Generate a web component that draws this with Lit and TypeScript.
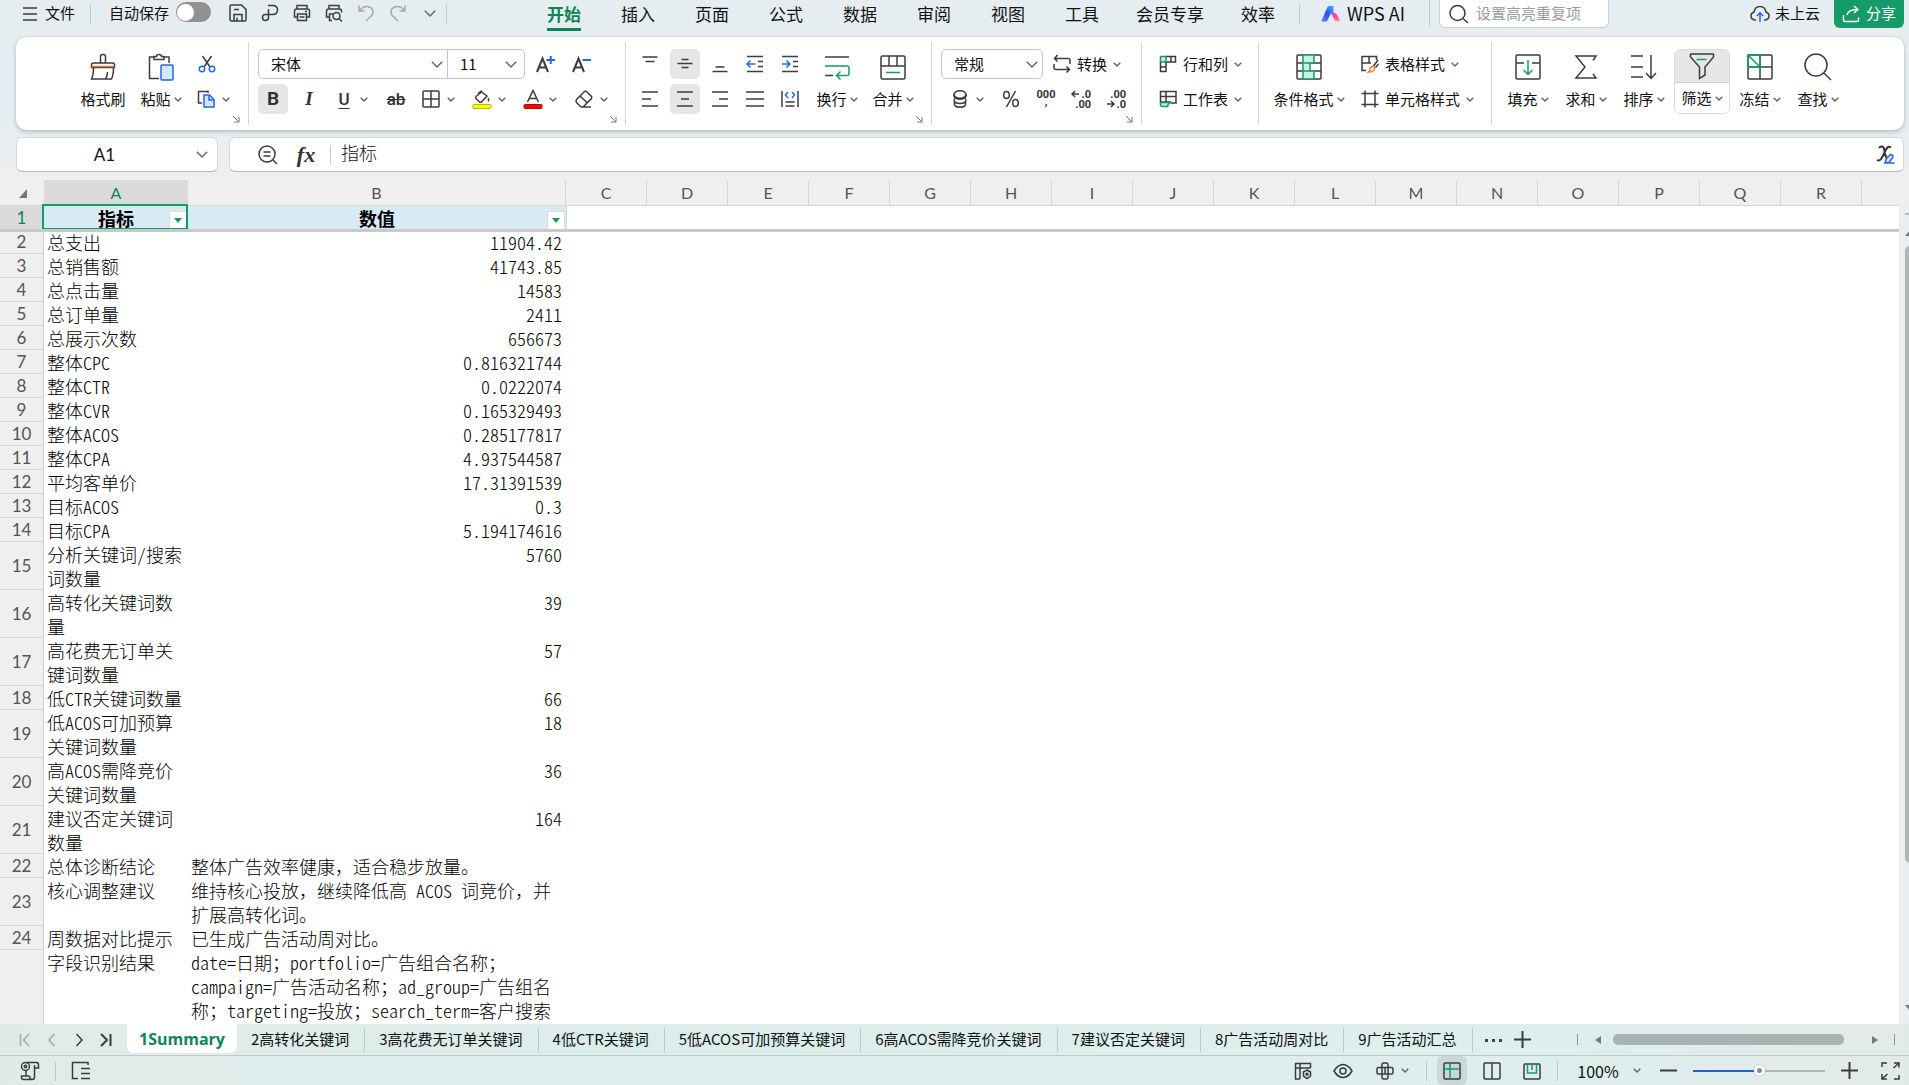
import { LitElement, html, svg, css, nothing, TemplateResult, SVGTemplateResult } from "lit";
import { customElement } from "lit/decorators.js";
import { classMap } from "lit/directives/class-map.js";

const icon = (w: number, h: number, body: SVGTemplateResult) =>
  html`<svg class="ic" width=${w} height=${h} viewBox="0 0 ${w} ${h}" aria-hidden="true">${body}</svg>`;

const chev = html`<svg class="ic chev" width="8" height="5" viewBox="0 0 8 5" aria-hidden="true"><path d="M.7.7 4 4 7.3.7" /></svg>`;
const chevBig = html`<svg class="ic chev" width="12" height="7" viewBox="0 0 12 7" aria-hidden="true"><path d="M.8.8 6 6 11.2.8" /></svg>`;

const I = {
  menu: icon(14, 16, svg`<path d="M0 2h14M0 8h14M0 14h14"/>`),
  save: icon(18, 18, svg`<path d="M1 2.5Q1 1 2.5 1H12.500L17 5.500V15.500Q17 17 15.500 17H2.500Q1 17 1 15.500ZM5 17V10.500H13V17M5 5.500h5M8 13.500v3.500"/>`),
  pdf: icon(18, 18, svg`<path d="M7 1.500H11.500Q16.500 1.500 16.500 6T11.500 10.500H4.500Q1.500 10.500 1.500 13.500T4.500 16.500T7.500 13.500V5"/>`),
  print: icon(18, 18, svg`<path d="M4 5V1.500H14V5M4 13H1.500V7Q1.500 5 3.500 5H14.500Q16.500 5 16.500 7V13H14M4.500 10H13.500V16.500H4.500ZM12 7.500h2M6.500 13h5"/>`),
  preview: icon(18, 18, svg`<path d="M4 5V1.500H14V5M4 13H1.500V7Q1.500 5 3.500 5H14.500Q16.500 5 16.500 7V8.500M7 16.500H4.500V10H8"/><circle cx="11.500" cy="12" r="3.500"/><path d="M14 14.500l3 3"/>`),
  undo: icon(18, 18, svg`<path class="faint" d="M2 1.500V7H7.500M2 7Q6 2 10.500 2.500Q16 3.500 16 8Q16 11 12.500 13.500L9 17"/>`),
  redo: icon(18, 18, svg`<path class="faint" d="M16 1.500V7H10.500M16 7Q12 2 7.500 2.500Q2 3.500 2 8Q2 11 5.500 13.500L9 17"/>`),
  wps: html`<svg class="ic" width="20" height="16" viewBox="0 0 20 16" aria-hidden="true">
    <defs>
      <linearGradient id="wa" x1="0" y1="1" x2="1" y2="0"><stop offset="0" stop-color="#7a7cff" /><stop offset=".5" stop-color="#2f4bff" /><stop offset="1" stop-color="#38b6ff" /></linearGradient>
      <linearGradient id="wb" x1="0" y1="0" x2="0" y2="1"><stop offset="0" stop-color="#f02ad8" /><stop offset=".6" stop-color="#ff4fa0" /><stop offset="1" stop-color="#ffb35c" /></linearGradient>
    </defs>
    <path style="stroke:none" fill="url(#wa)" d="M6.500 1Q7 0 8 0H12.500V7H10L6 15Q5.500 15.500 4.500 15.500H1Q0 15.500 .5 14.500Z" />
    <path style="stroke:none" fill="url(#wb)" d="M10 7H13.500Q15 7 15.700 8.500L19.500 15.500H15.500Q14 15.500 13.400 14Z" />
  </svg>`,
  search: icon(20, 20, svg`<circle cx="8.500" cy="9" r="7.500"/><path d="M14 14.500l5 4.500"/>`),
  cloud: icon(20, 18, svg`<path d="M6 15H5Q1 14.500 1 10.800Q1 8 4 7Q5 1.500 10 1.500T16 7Q19 8 19 10.800Q19 14.500 15 15H14"/><path class="blue" d="M10 17V8M6.800 11L10 7.800 13.200 11"/>`),
  share: icon(18, 18, svg`<path class="white" d="M1.500 10V15Q1.500 16.500 3 16.500H15Q16.500 16.500 16.500 15V12.500M5 10Q6 4.500 15.500 4.500M12 1L15.800 4.500 12 8"/>`),
  brush: icon(26, 28, svg`<path d="M10.500 10V3.500Q10.500 1.500 13 1.500T15.500 3.500V10M3.500 10H22.500Q24.500 10 24.500 12V14.500H1.500V12Q1.500 10 3.500 10ZM3.500 15Q3.500 22 1.500 26H21.500Q23.500 22 23.500 15M15.500 26Q17.500 23 17.500 19"/><path class="orange" d="M1.500 13.500H24.500"/>`),
  paste: icon(26, 28, svg`<path d="M6 4H1.500V25.500H11M16 4H21V10"/><path d="M6 6.500V3.500H8.500Q8.500 1.500 11 1.500T13.500 3.500H16V6.500Z"/><rect class="bluefill" x="13" y="12" width="12" height="15" rx="1"/>`),
  cut: icon(18, 18, svg`<path d="M4.500 1L12 12M13.500 1L6 12"/><circle class="blue" cx="4" cy="14" r="2.700"/><circle class="blue" cx="14" cy="14" r="2.700"/>`),
  copy: icon(18, 18, svg`<path d="M5 13H1.500V1.500H11V3"/><path class="bluefill" d="M7 5H12.500L17 9.500V17H7Z"/><path class="blue" d="M12 5V10H17"/>`),
  aPlus: icon(20, 20, svg`<path class="bold" d="M2 18L7.500 4.500L13 18M4 13.500H11"/><path class="blue bold" d="M11.500 6h8.500M15.700 2v8"/>`),
  aMinus: icon(20, 20, svg`<path class="bold" d="M2 18L7.500 4.500L13 18M4 13.500H11"/><path class="blue bold" d="M11.500 6h8.500"/>`),
  border: icon(18, 18, svg`<rect x="1" y="1" width="16" height="16" rx="1"/><path d="M9 1v16M1 9h16"/>`),
  fill: icon(20, 20, svg`<path d="M6 4.500L10 1.500M4 7.500L9.500 3L15 7L9.500 13Q8.500 13.500 7.500 13L4 9.500Q3.500 8.500 4 7.500ZM16.500 9v3.500"/><rect x="1" y="15.500" width="18" height="4" rx="1" style="fill:#ff0;stroke:#b9b900;stroke-width:1"/>`),
  fontColor: icon(20, 20, svg`<path d="M4.500 13L10 1.500L15.500 13M6.500 9.500H13.500"/><rect x="1" y="15.500" width="18" height="4" rx="1" style="fill:#f00;stroke:#c00000;stroke-width:1"/>`),
  eraser: icon(20, 18, svg`<path d="M2.500 9.500L10.500 1.500Q11.500 1 12.500 1.500L17.500 6.500Q18 7.500 17.500 8.500L9 17H7L2.500 12.500Q1.500 11 2.500 9.500ZM6 6L13.500 13M9 17h8"/>`),
  vTop: icon(18, 18, svg`<path d="M1.500 2h15M4.500 6.500h9"/>`),
  vMid: icon(18, 18, svg`<path d="M5.500 4.500h7M1.500 8.500h15M5.500 12.500h7"/>`),
  vBot: icon(18, 18, svg`<path d="M4.500 12h9M1.500 16.500h15"/>`),
  outdent: icon(18, 18, svg`<path d="M1 1.500h16M12 6.500h5M12 11.500h5M1 16.500h16"/><path class="blue" d="M9.500 9H1M4.500 5.500L1 9l3.500 3.500"/>`),
  indent: icon(18, 18, svg`<path d="M1 1.500h16M12 6.500h5M12 11.500h5M1 16.500h16"/><path class="blue" d="M1 9H9M5.500 5.500L9 9l-3.500 3.500"/>`),
  hLeft: icon(18, 18, svg`<path d="M1 2h16M1 9h9M1 16h16"/>`),
  hMid: icon(18, 18, svg`<path d="M1 2h16M5 9h8M1 16h16"/>`),
  hRight: icon(18, 18, svg`<path d="M1 2h16M8 9h9M1 16h16"/>`),
  hJust: icon(18, 18, svg`<path d="M0 2h18M0 9h18M0 16h18"/>`),
  hDist: icon(18, 18, svg`<path d="M1 1v16M17 1v16M4.500 12h9M4.500 16h9"/><path class="blue" d="M7 2L4.500 5 7 8M11 2L13.500 5 11 8"/>`),
  wrap: icon(26, 26, svg`<path d="M1 3h24M1 21.500h8"/><path class="green" d="M1 12H23Q25 12 25 14V19.500Q25 21.500 23 21.500H13M16.500 17.500L12.500 21.500l4 4"/>`),
  merge: icon(26, 26, svg`<rect x="1" y="2" width="24" height="23" rx="1.500"/><path d="M1 12h24M9 2v10M17 2v10"/><path class="green" d="M6 18.500h14"/>`),
  convert: icon(18, 18, svg`<path d="M4.500 0L1.500 3.500l3 3M1.500 3.500H15Q17 3.500 17 5.500V9M1 9v3.500Q1 14.500 3 14.500H16.500M13.500 11.500l3 3-3 3"/>`),
  coins: icon(18, 18, svg`<ellipse cx="9" cy="4.500" rx="6" ry="3.800"/><path d="M3 4.500Q2.500 7 4.500 8Q3 9 3 10.500Q4 13.500 9 13.500T15 10.500Q15 9 13.500 8Q15.500 7 15 4.500M3.500 12Q2 17.200 9 17.200T14.500 12M4.500 8Q9 10.500 13.500 8"/>`),
  percent: icon(18, 18, svg`<ellipse cx="4.500" cy="5" rx="2.800" ry="3.500"/><ellipse cx="13.500" cy="13" rx="2.800" ry="3.500"/><path d="M13.500 1L4.500 17"/>`),
  thousands: icon(20, 20, svg`<text x="10" y="9" text-anchor="middle">000</text><text x="10" y="16" text-anchor="middle">,</text>`),
  decMore: icon(20, 20, svg`<path d="M8 5H1M4 2L1 5l3 3"/><text x="20" y="9" text-anchor="end">.0</text><text x="20" y="19" text-anchor="end">.00</text>`),
  decLess: icon(20, 20, svg`<path d="M1 15H8M5 12l3 3-3 3"/><text x="20" y="9" text-anchor="end">.00</text><text x="20" y="19" text-anchor="end">.0</text>`),
  rowsCols: icon(18, 18, svg`<path d="M1.500 7V16.500H7V7M1.500 12H7M7 1.500H16.500V7H7M12 1.500V7"/><path class="greenfill" d="M1.500 1.500H7V7H1.500Z"/>`),
  sheet: icon(18, 18, svg`<path d="M12 13H17V1.500H1.500V12M1.500 6.500H17M7 1.500V12M1.500 12H12"/><path class="greenfill" d="M1.500 12.500H12Q9 13 8.500 16.500H3.500Q1.500 16.500 1.500 14.500Z"/>`),
  cond: icon(26, 26, svg`<rect x="1" y="1" width="24" height="24" rx="1"/><path d="M1 9h24M1 17h24"/><path class="greenfill" d="M7 1H18V9H7ZM7 9H14V17H7ZM7 17H18V25H7Z"/>`),
  tableStyle: icon(18, 18, svg`<path d="M5 15.500H1V1.500H15.500V5M1 8H10M8 1.500V8M17 5L12.500 11M17.500 9L14.500 12.500"/><path class="orange" d="M7.500 17Q9 16 9 14T11.500 11.500T13.500 14Q13 17 7.500 17Z"/>`),
  cellStyle: icon(18, 18, svg`<path d="M4 .5v17M14 .5v17M.5 3.500h17M.5 14.500h17"/>`),
  fillDown: icon(26, 26, svg`<path d="M9 9H1V2Q1 1 2 1H24Q25 1 25 2V9H17M1 9V24Q1 25 2 25H24Q25 25 25 24V9"/><path class="green" d="M13 6V20M8.500 16L13 20.500 17.500 16"/>`),
  sum: icon(26, 26, svg`<path d="M20 6.500L23 2H3L12 13L3 24H23L20 20"/>`),
  sort: icon(28, 26, svg`<path d="M1 2h12M1 13h12M1 23h12M21 1V24M16 19l5 5.500 5-5.500"/>`),
  filter: icon(26, 26, svg`<path d="M1.500 2Q1 1 2 1H24Q25 1 24.500 2V4L16 14V22L10.500 25.500V14L1.500 4Z"/><path class="green" d="M7.500 6.500h10"/>`),
  freeze: icon(26, 26, svg`<rect x="1" y="1" width="24" height="24" rx="1"/><path d="M13 13V25M13 13H25M1 13H13M13 1V13"/><path class="green" d="M1 1H13V13H1ZM1 1L13 13"/>`),
  find: icon(28, 28, svg`<circle cx="12" cy="12" r="11"/><path d="M20 20l7 7"/>`),
  launch: icon(8, 8, svg`<path class="thin" d="M1 1L7 7M7 2V7H2"/>`),
  zoomOut: icon(20, 20, svg`<circle cx="9" cy="9" r="8"/><path d="M15 15l4 4M5.500 7h7M5.500 11h7"/>`),
  fx: html`<span class="fx">fx</span>`,
  varEdit: icon(20, 20, svg`<path style="stroke:#333;stroke-width:2" d="M3 3Q4 1.500 5.500 1.500Q8 1.500 8.500 6T11 14M15 2.500Q12 0 9.500 5.500T5 14Q3 16.500 1 15"/><path class="bluefill" d="M9 18L10.500 13.500L14.500 9.500Q17 9.500 17 12L13 17.500ZM9 18h9.500"/>`),
  first: icon(12, 14, svg`<path class="faint" d="M1.500 1v12M10 1L4.500 7l5.500 6"/>`),
  prev: icon(12, 14, svg`<path class="faint" d="M8.500 1L3 7l5.500 6"/>`),
  next: icon(12, 14, svg`<path d="M3.500 1L9 7l-5.500 6"/>`),
  last: icon(12, 14, svg`<path style="stroke-width:2" d="M1 1L7 7l-6 6M10.500 1v12"/>`),
  plus: icon(17, 17, svg`<path style="stroke-width:2" d="M8.500 0v17M0 8.500h17"/>`),
  minus: icon(17, 17, svg`<path style="stroke-width:2" d="M0 8.500h17"/>`),
  dots: icon(17, 4, svg`<path style="stroke:none;fill:#444" d="M0 1h3v3H0ZM7 1h3v3H7ZM14 1h3v3H14Z"/>`),
  macro: icon(20, 20, svg`<circle cx="5.500" cy="5.500" r="4"/><circle cx="5.500" cy="5.500" r="1.200"/><path d="M7 1.500H16.500Q18.500 1.500 18.500 4V7H14.500V16Q14.500 18.500 12 18.500H3.500Q1.500 18.500 1.500 16.500V15H9.500M14.500 7V4M6 10v5M9.500 15Q9.500 18.500 12 18.500"/>`),
  outline: icon(20, 19, svg`<path d="M17 4V1.500H1.500V17.500H7M10 7.500h9M10 12.500h9M10 17.500h9"/>`),
  view: icon(18, 18, svg`<path d="M6 17H1.500V1.500H16.500V6M1.500 6H16.500M6 1.500V17"/><path d="M13 8L16.500 10V14L13 16.500L9.500 14V10Z"/><circle cx="13" cy="12.200" r="1"/>`),
  eye: icon(20, 16, svg`<path d="M1 8Q5 1.500 10 1.500T19 8Q15 14.500 10 14.500T1 8Z"/><circle cx="10" cy="8" r="3"/>`),
  cross: icon(18, 18, svg`<path d="M6 2.500Q6 1 7.500 1H10.500Q12 1 12 2.500V15.500Q12 17 10.500 17H7.500Q6 17 6 15.500ZM2.500 5.500H15.500Q17 5.500 17 7V10.500Q17 12 15.500 12H2.500Q1 12 1 10.500V7Q1 5.500 2.500 5.500ZM9 5.500V12"/>`),
  normal: icon(18, 18, svg`<rect x="1" y="1" width="16" height="16" rx="1"/><path class="green" d="M7 1v16M1 7h16"/>`),
  page: icon(18, 18, svg`<rect x="1" y="1" width="16" height="16" rx="1"/><path d="M9 1v16"/>`),
  breaks: icon(18, 18, svg`<rect x="1" y="2" width="16" height="15" rx="1"/><path class="green" d="M4.500 2V11H13.500V2M9 2v6"/>`),
  full: icon(19, 18, svg`<path d="M1 5V1H6M13 1H18V5.500M17.500 1.500L12.500 6M18 13v4H13M1 12v5H6M1.500 16.500L6.500 12"/>`),
};

const rows: { n: string; a: string; b: string; text?: boolean }[] = [
  { n: "2", a: "总支出", b: "11904.42" },
  { n: "3", a: "总销售额", b: "41743.85" },
  { n: "4", a: "总点击量", b: "14583" },
  { n: "5", a: "总订单量", b: "2411" },
  { n: "6", a: "总展示次数", b: "656673" },
  { n: "7", a: "整体CPC", b: "0.816321744" },
  { n: "8", a: "整体CTR", b: "0.0222074" },
  { n: "9", a: "整体CVR", b: "0.165329493" },
  { n: "10", a: "整体ACOS", b: "0.285177817" },
  { n: "11", a: "整体CPA", b: "4.937544587" },
  { n: "12", a: "平均客单价", b: "17.31391539" },
  { n: "13", a: "目标ACOS", b: "0.3" },
  { n: "14", a: "目标CPA", b: "5.194174616" },
  { n: "15", a: "分析关键词/搜索词数量", b: "5760" },
  { n: "16", a: "高转化关键词数量", b: "39" },
  { n: "17", a: "高花费无订单关键词数量", b: "57" },
  { n: "18", a: "低CTR关键词数量", b: "66" },
  { n: "19", a: "低ACOS可加预算关键词数量", b: "18" },
  { n: "20", a: "高ACOS需降竞价关键词数量", b: "36" },
  { n: "21", a: "建议否定关键词数量", b: "164" },
  { n: "22", a: "总体诊断结论", b: "整体广告效率健康，适合稳步放量。", text: true },
  { n: "23", a: "核心调整建议", b: "维持核心投放，继续降低高 ACOS 词竞价，并扩展高转化词。", text: true },
  { n: "24", a: "周数据对比提示", b: "已生成广告活动周对比。", text: true },
  { n: "", a: "字段识别结果", b: "date=日期；portfolio=广告组合名称；campaign=广告活动名称；ad_group=广告组名称；targeting=投放；search_term=客户搜索", text: true },
];

// Cells use half-width Latin figures; the full-width comma keeps its whole em.
const cellText = (s: string) =>
  s.split(/(，)/).map((part, i) => (i % 2 ? html`<span class="full">${part}</span>` : part));

const columns = "CDEFGHIJKLMNOPQR".split("");
const menus = ["开始", "插入", "页面", "公式", "数据", "审阅", "视图", "工具", "会员专享", "效率"];
const sheets = ["1Summary", "2高转化关键词", "3高花费无订单关键词", "4低CTR关键词", "5低ACOS可加预算关键词", "6高ACOS需降竞价关键词", "7建议否定关键词", "8广告活动周对比", "9广告活动汇总"];

const sq = (ic: TemplateResult, name: string, on = false) =>
  html`<button class=${classMap({ sq: true, on })} aria-label=${name}>${ic}</button>`;
const split = (ic: TemplateResult, name: string) =>
  html`<button class="split" aria-label=${name}><span class="slot">${ic}</span>${chev}</button>`;
const wide = (ic: TemplateResult, label: string) =>
  html`<button class="wide">${ic}<span>${label}</span>${chev}</button>`;
const big = (ic: TemplateResult, label: string, arrow = true, on = false) =>
  html`<button class=${classMap({ big: true, boxed: on })}><span class="top">${ic}</span><span class="lbl">${label}${arrow ? chev : nothing}</span></button>`;
const launcher = (name: string) => html`<button class="launcher" aria-label=${name}>${I.launch}</button>`;

@customElement("app-root")
export class AppRoot extends LitElement {
  static styles = css`
    :host {
      display: flex;
      flex-direction: column;
      height: 100vh;
      overflow: hidden;
      background: linear-gradient(180deg, #e5edf1 0, #e5edf1 120px, #efefef 172px);
      font: 15px/20px "Noto Sans CJK SC", "Liberation Sans", sans-serif;
      color: #111;
    }
    * { box-sizing: border-box; }
    button, input, select {
      font: inherit;
      color: inherit;
      background: none;
      border: 0;
      margin: 0;
      padding: 0;
      outline: 0;
    }
    button { display: flex; align-items: center; justify-content: center; white-space: nowrap; }
    .ic { display: block; flex: none; fill: none; stroke: #3c3c3c; stroke-width: 1.5; overflow: visible; }
    .ic text { fill: #333; stroke: none; font: bold 11px Roboto, sans-serif; }
    .chev { stroke: #666; }
    .bold { stroke-width: 2; }
    .blue { stroke: #2468e0; }
    .bluefill { stroke: #2468e0; fill: #d8e6ff; }
    .green { stroke: #149b68; }
    .greenfill { stroke: #149b68; fill: #cdeee0; }
    .orange { stroke: #e8792f; }
    .white { stroke: #fff; }
    .faint { stroke: #a3a8ab; }
    .thin { stroke: #777; stroke-width: 1; }

    .header { display: flex; align-items: flex-start; height: 37px; padding: 0 5px 0 23px; flex: none; }
    .header > * { height: 28px; flex: none; }
    .header > button > span, .auto > span { padding-bottom: 2px; }
    .file { gap: 8px; }
    .rule { width: 1px; height: 20px; background: #c5ccd0; }
    .header .rule { height: 20px; margin-top: 4px; }
    .auto { display: flex; align-items: center; gap: 7px; margin: 0 11px 0 18px; }
    .toggle { appearance: none; width: 35px; height: 20px; border-radius: 10px; background: #919191; display: flex; align-items: center; padding-left: 1px; margin-bottom: 4px; }
    .toggle::before { content: ""; width: 17px; height: 17px; border-radius: 50%; background: #fff; }
    .quick { display: flex; }
    .quick button { width: 32px; height: 26px; }
    .file + .rule { margin-left: 15px; }
    .menus { display: flex; margin: 0 4px 0 80px; }
    .header .menus { height: 31px; }
    .menus button { width: 74px; font-size: 17px; height: 28px; align-items: flex-start; }
    .menus button.long { width: 102px; }
    .menus button span { height: 31px; line-height: 27px; }
    .menus button.on span { color: #0e8457; font-weight: 700; border-bottom: 3px solid #0e8457; }
    .ai { font-size: 18px; gap: 6px; margin: 0 24px 0 21px; }
    .header .rule.tall { height: 26px; margin-top: 0; }
    .search { display: flex; align-items: center; gap: 7px; margin-left: 9px; width: 170px; padding: 0 9px; background: #fff; border: 1px solid #c9d0d3; border-top: 0; border-radius: 0 0 6px 6px; }
    .search input { width: 100%; min-width: 0; padding-bottom: 2px; }
    .search input::placeholder { color: #9a9a9a; opacity: 1; }
    .cloud { margin-left: auto; gap: 5px; }
    .share { margin-left: 14px; width: 70px; gap: 6px; background: #149b68; color: #fff; border-radius: 0 0 6px 6px; }

    .ribbon { display: flex; flex: none; height: 93px; margin: 0 5px 0 16px; padding: 5px 0; background: #fff; border-radius: 10px; box-shadow: 0 0 1px #9fa9ad, 0 2px 4px #b7c0c4; }
    .group { display: grid; flex: none; border-right: 1px solid #d7d7d7; height: 83px; }
    .group > * { grid-area: 1 / 1; }
    .group:last-child { border: 0; flex: 1; }
    .launcher { align-self: end; justify-self: end; width: 16px; height: 12px; margin-right: 4px; }
    .body { display: flex; padding: 7px 0 0 9px; height: 72px; }
    .g1 { width: 233px; } .g2 { width: 377px; } .g3 { width: 306px; } .g4 { width: 210px; }
    .g5 { width: 117px; } .g6 { width: 233px; }
    .g1 .body { padding-left: 58px; }
    .g5 .body { padding-left: 12px; }
    .g7 .body { padding-left: 7px; }
    .g6 .stack { margin-left: 6px; }
    .g1 .stack { margin-left: 2px; }
    .stack { display: flex; flex-direction: column; gap: 5px; }
    .line { display: flex; gap: 5px; height: 30px; }
    .line.loose { gap: 6px; }
    .line.inset { padding-left: 5px; }
    .sq { width: 30px; height: 30px; border-radius: 5px; }
    .sq.on { background: #e6e6e6; }
    .split { width: 45px; height: 30px; padding-left: 5px; gap: 7px; justify-content: flex-start; }
    .slot { width: 18px; display: flex; justify-content: center; }
    .wide { height: 30px; padding: 0 5px; gap: 6px; justify-content: flex-start; }
    .wide span { padding-bottom: 1px; }
    .big { flex-direction: column; width: 58px; height: 65px; border-radius: 6px; }
    .g3 .big { width: 56px; }
    .g3 .big:first-of-type { margin-left: 4px; }
    .g6 .big { width: 82px; }
    .big .top { flex: 1; display: flex; align-items: center; justify-content: center; width: 100%; }
    .big .lbl { height: 30px; display: flex; align-items: center; gap: 3px; }
    .big.boxed { border: 1px solid #dcdcdc; margin: 0 1px; width: 56px; }
    .boxed .top { background: #e6e6e6; border-bottom: 1px solid #cfcfcf; border-radius: 5px 5px 0 0; }
    .glyph { font: 19px/20px Roboto, sans-serif; color: #333; }
    .glyph.b { font-weight: 700; font-size: 19px; }
    .glyph.i { font: italic bold 19px/20px "Liberation Serif", serif; }
    .glyph.u { font-weight: 500; text-decoration: underline; text-underline-offset: 3px; font-size: 17px; }
    .glyph.s { font-weight: 500; text-decoration: line-through; font-size: 17px; }
    .pick { display: grid; align-items: center; border: 1px solid #c4c4c4; border-radius: 5px; height: 30px; background: #fff; }
    .pick > * { grid-area: 1 / 1; }
    .pick select { appearance: none; width: 100%; height: 28px; padding-left: 12px; }
    .pick .chev { justify-self: end; margin-right: 4px; pointer-events: none; }
    .family { width: 190px; border-radius: 5px 0 0 5px; }
    .size { width: 77px; border-radius: 0 5px 5px 0; border-left: 0; margin: 0 -1px 0 -6px; }
    .size .chev { margin-right: 7px; }
    .format { width: 102px; }

    .formula { display: flex; flex: none; gap: 11px; margin: 7px 5px 8px 16px; }
    .box { display: flex; align-items: center; height: 35px; background: #fff; border: 1px solid #d3d8da; border-bottom-color: #b8b8b8; border-radius: 6px; }
    .name { width: 202px; padding-right: 9px; }
    .name input { flex: 1; min-width: 0; text-align: center; font: 17px Lato, sans-serif; padding-right: 4px; }
    .fbar { flex: 1; padding: 0 7px 0 28px; }
    .fbar button { width: 20px; }
    .fx { font: italic bold 22px/20px "Liberation Serif", serif; color: #333; }
    .fbar .fxb { margin: 0 14px 0 18px; }
    .fbar input { flex: 1; margin-left: 10px; font-size: 18px; font-weight: 300; line-height: 24px; padding-bottom: 5px; }

    .sheet { display: flex; flex: 1; min-height: 0; overflow: hidden; background: #e6ecee; }
    .canvas { flex: 1; min-width: 0; overflow: hidden; background: #fff; position: relative; }
    table { width: 100%; table-layout: fixed; border-collapse: separate; border-spacing: 0; font-size: 18px; line-height: 24px; }
    .c0 { width: 44px; } .ca { width: 144px; } .cb { width: 378px; } .cx { width: 81px; }
    thead th { height: 26px; padding: 0; background: #efefef; color: #555; font: 16px/20px Lato, sans-serif; border-right: 1px solid #d6d6d6; border-bottom: 1px solid #d6d6d6; }
    thead th.sel { background: #dadada; color: #0e8457; border-right: 0; }
    thead th.corner, thead th.end { border-right: 0; }
    .corner div { display: flex; justify-content: flex-end; padding: 2px 17px 0 0; }
    tbody th { background: #efefef; color: #555; font: 17px/20px Lato, sans-serif; border-right: 1px solid #cfcfcf; border-bottom: 1px solid #d6d6d6; padding: 0; }
    tbody th.sel { background: #dadada; color: #0e8457; }
    tbody td { padding: 0 4px 0 3px; vertical-align: top; font-weight: 300; font-feature-settings: "hwid"; color: #000; }
    .full { font-feature-settings: normal; }
    td.num { text-align: right; }
    tr.last th { height: 120px; }
    tr.head td { height: 24px; background: #d8eaf5; font-weight: 700; }
    tr.head td.blank { background: #fff; border-left: 1px solid #d6d6d6; }
    .cell { display: grid; grid-template-columns: 16px 1fr 18px; align-items: end; text-align: center; height: 24px; margin-right: -3px; }
    .cell span { grid-column: 2; }
    .drop { width: 18px; height: 19px; background: #fff; border: 1px solid #ddd; }
    .a1 { position: relative; }
    .a1::after { content: ""; position: absolute; inset: -2px 0 0 -2px; border: 2px solid #149b68; pointer-events: none; }
    .freeze { position: absolute; left: 0; right: 0; top: 49px; height: 3px; background: #c9c9c9; }
    .vbar { display: flex; flex-direction: column; flex: none; width: 10px; padding: 0 0 12px 6px; overflow: hidden; background: #e9eef0; border-top: 26px solid #efefef; }
    .vbar .dash { width: 12px; height: 2px; margin: 7px 0 14px; background: #b9bcbd; flex: none; }
    .vbar .thumb { flex: 0 1 617px; width: 14px; margin-top: 10px; background: #b3b6b6; border-radius: 5px; }
    .vbar .down { margin-top: auto; }
    .vbar svg { flex: none; }

    .tabs { display: flex; align-items: center; flex: none; height: 32px; padding: 0 14px 0 11px; background: linear-gradient(90deg, #e0ebe8, #dcedec 40%, #ddeeec 80%, #e2eae9); border-bottom: 1px solid #bccaca; }
    .nav { display: flex; margin-right: 8px; }
    .nav button { width: 27px; height: 28px; }
    .tab { height: 24px; padding: 0 15px 1px 14px; border-right: 1px solid #bccaca; }
    .tab.on { height: 29px; align-self: flex-start; padding: 0 12px; background: #fff; border: 0; border-radius: 0 0 7px 7px; color: #0e8457; font: bold 16px/20px "Open Sans", sans-serif; }
    .tabs .more { width: 17px; height: 24px; margin-left: 12px; }
    .hbar { display: flex; align-items: center; flex: 0 0 318px; margin-left: auto; }
    .hbar .tick { width: 1px; height: 11px; background: #8c9898; }
    .hbar .thumb { flex: 1; height: 11px; border-radius: 5px; background: #a9b3b2; margin: 0 28px 0 12px; }
    .hbar .l { margin-left: 17px; }
    .hbar .r { margin-right: 16px; }

    .status { display: flex; align-items: center; flex: none; height: 29px; padding: 0 9px 0 20px; background: linear-gradient(90deg, #dfebe9, #dcedec 40%, #ddeeec 80%, #e2eae9); }
    .status .rule { background: #bccaca; }
    .lefts { display: flex; align-items: center; gap: 15px; }
    .rights { display: flex; align-items: center; margin-left: auto; gap: 10px; }
    .rights button { width: 30px; height: 29px; }
    .rights .on { background: #c9d7d6; border-radius: 6px; }
    .rights .mv { width: 40px; gap: 7px; margin-left: 8px; justify-content: flex-start; }
    .rights button.zoom { width: 62px; margin: 0 4px 0 10px; font-size: 16px; gap: 14px; }
    .rights button.z { width: 17px; margin: 0 6px; }
    .rights button.end { width: 19px; margin-left: 7px; }
    input[type="range"] { appearance: none; width: 132px; height: 14px; background: linear-gradient(90deg, #1f60c9 50%, #adb9b9 50%) center / 100% 2px no-repeat; }
    input[type="range"]::-webkit-slider-thumb { appearance: none; width: 11px; height: 11px; border-radius: 50%; border: 3px solid #fff; background: #8a8a8a; box-shadow: 0 0 1px #667; }
  `;

  private tri(points: string, w: number, h: number, cls = "") {
    return html`<svg class=${cls} width=${w} height=${h} viewBox="0 0 ${w} ${h}" aria-hidden="true"><polygon points=${points} fill="#777" /></svg>`;
  }

  private header() {
    return html`<header class="header">
      <button class="file">${I.menu}<span>文件</span></button>
      <span class="rule"></span>
      <label class="auto"><span>自动保存</span><input type="checkbox" class="toggle" /></label>
      <div class="quick">
        <button aria-label="保存">${I.save}</button><button aria-label="输出为PDF">${I.pdf}</button>
        <button aria-label="打印">${I.print}</button><button aria-label="打印预览">${I.preview}</button>
        <button aria-label="撤销">${I.undo}</button><button aria-label="恢复">${I.redo}</button>
        <button aria-label="更多">${chevBig}</button>
      </div>
      <span class="rule"></span>
      <nav class="menus">
        ${menus.map((m, i) => html`<button class=${classMap({ on: i === 0, long: m.length > 2 })}><span>${m}</span></button>`)}
      </nav>
      <span class="rule"></span>
      <button class="ai">${I.wps}<span>WPS AI</span></button>
      <span class="rule tall"></span>
      <label class="search">${I.search}<input type="text" placeholder="设置高亮重复项" aria-label="搜索" /></label>
      <button class="cloud">${I.cloud}<span>未上云</span></button>
      <button class="share">${I.share}<span>分享</span></button>
    </header>`;
  }

  private ribbon() {
    return html`<section class="ribbon">
      <div class="group g1"><div class="body">
        ${big(I.brush, "格式刷", false)} ${big(I.paste, "粘贴")}
        <div class="stack">${sq(I.cut, "剪切")}${split(I.copy, "复制")}</div>
      </div>${launcher("剪贴板设置")}</div>

      <div class="group g2"><div class="body"><div class="stack">
        <div class="line loose">
          <label class="pick family"><select aria-label="字体"><option>宋体</option></select>${chevBig}</label>
          <label class="pick size"><select aria-label="字号"><option>11</option></select>${chevBig}</label>
          ${sq(I.aPlus, "增大字号")}${sq(I.aMinus, "减小字号")}
        </div>
        <div class="line loose">
          ${sq(html`<span class="glyph b">B</span>`, "加粗", true)}
          ${sq(html`<span class="glyph i">I</span>`, "倾斜")}
          ${split(html`<span class="glyph u">U</span>`, "下划线")}
          ${sq(html`<span class="glyph s">ab</span>`, "删除线")}
          ${split(I.border, "边框")}${split(I.fill, "填充颜色")}${split(I.fontColor, "字体颜色")}${split(I.eraser, "清除")}
        </div>
      </div></div>${launcher("字体设置")}</div>

      <div class="group g3"><div class="body">
        <div class="stack">
          <div class="line">${sq(I.vTop, "顶端对齐")}${sq(I.vMid, "垂直居中", true)}${sq(I.vBot, "底端对齐")}${sq(I.outdent, "减少缩进")}${sq(I.indent, "增加缩进")}</div>
          <div class="line">${sq(I.hLeft, "左对齐")}${sq(I.hMid, "水平居中", true)}${sq(I.hRight, "右对齐")}${sq(I.hJust, "两端对齐")}${sq(I.hDist, "分散对齐")}</div>
        </div>
        ${big(I.wrap, "换行")}${big(I.merge, "合并")}
      </div>${launcher("对齐设置")}</div>

      <div class="group g4"><div class="body"><div class="stack">
        <div class="line">
          <label class="pick format"><select aria-label="数字格式"><option>常规</option></select>${chevBig}</label>
          ${wide(I.convert, "转换")}
        </div>
        <div class="line inset">${split(I.coins, "货币")}${sq(I.percent, "百分比")}${sq(I.thousands, "千位分隔")}${sq(I.decMore, "增加小数")}${sq(I.decLess, "减少小数")}</div>
      </div></div>${launcher("数字设置")}</div>

      <div class="group g5"><div class="body"><div class="stack">${wide(I.rowsCols, "行和列")}${wide(I.sheet, "工作表")}</div></div></div>

      <div class="group g6"><div class="body">
        ${big(I.cond, "条件格式")}
        <div class="stack">${wide(I.tableStyle, "表格样式")}${wide(I.cellStyle, "单元格样式")}</div>
      </div></div>

      <div class="group g7"><div class="body">
        ${big(I.fillDown, "填充")}${big(I.sum, "求和")}${big(I.sort, "排序")}${big(I.filter, "筛选", true, true)}${big(I.freeze, "冻结")}${big(I.find, "查找")}
      </div></div>
    </section>`;
  }

  private grid() {
    const drop = html`<button class="drop" aria-label="筛选"><svg width="8" height="5" viewBox="0 0 8 5" aria-hidden="true"><polygon points="0,0 8,0 4,5" fill="#149b68" /></svg></button>`;
    return html`<main class="sheet">
      <div class="canvas">
        <table>
          <colgroup><col class="c0" /><col class="ca" /><col class="cb" />${columns.map(() => html`<col class="cx" />`)}<col /></colgroup>
          <thead><tr>
            <th class="corner"><div>${this.tri("8,0 8,9 0,9", 8, 9)}</div></th>
            <th class="sel">A</th><th>B</th>
            ${columns.map((c) => html`<th>${c}</th>`)}<th class="end"></th>
          </tr></thead>
          <tbody>
            <tr class="head"><th class="sel">1</th>
              <td class="a1"><div class="cell"><span>指标</span>${drop}</div></td>
              <td><div class="cell"><span>数值</span>${drop}</div></td>
              <td class="blank" colspan="17"></td></tr>
            ${rows.map((r) => html`<tr class=${classMap({ last: !r.n })}><th>${r.n}</th><td>${r.a}</td><td class=${r.text ? "txt" : "num"}>${cellText(r.b)}</td><td colspan="17"></td></tr>`)}
          </tbody>
        </table>
        <div class="freeze"></div>
      </div>
      <div class="vbar">
        <span class="dash"></span>${this.tri("6,0 12,7 0,7", 12, 7)}<span class="thumb"></span>${this.tri("0,0 12,0 6,7", 12, 7, "down")}
      </div>
    </main>`;
  }

  render() {
    return html`
      ${this.header()} ${this.ribbon()}
      <section class="formula">
        <div class="box name"><input aria-label="名称框" value="A1" />${chevBig}</div>
        <div class="box fbar">
          <button aria-label="缩小">${I.zoomOut}</button>
          <button class="fxb" aria-label="插入函数">${I.fx}</button>
          <span class="rule"></span>
          <input aria-label="编辑栏" value="指标" />
          <button aria-label="变量">${I.varEdit}</button>
        </div>
      </section>
      ${this.grid()}
      <nav class="tabs">
        <div class="nav">
          <button aria-label="第一张">${I.first}</button><button aria-label="上一张">${I.prev}</button>
          <button aria-label="下一张">${I.next}</button><button aria-label="最后一张">${I.last}</button>
        </div>
        ${sheets.map((s, i) => html`<button class=${classMap({ tab: true, on: i === 0 })}>${s}</button>`)}
        <button class="more" aria-label="更多工作表">${I.dots}</button>
        <button class="more" aria-label="新建工作表">${I.plus}</button>
        <div class="hbar">
          <span class="tick"></span>${this.tri("6,0 6,8 0,4", 6, 8, "l")}<span class="thumb"></span>${this.tri("0,0 6,4 0,8", 6, 8, "r")}<span class="tick"></span>
        </div>
      </nav>
      <footer class="status">
        <div class="lefts"><button aria-label="宏">${I.macro}</button><span class="rule"></span><button aria-label="目录">${I.outline}</button></div>
        <div class="rights">
          <button aria-label="视图设置">${I.view}</button>
          <button aria-label="护眼模式">${I.eye}</button>
          <button class="mv" aria-label="阅读模式">${I.cross}${chev}</button>
          <span class="rule"></span>
          <button class="on" aria-label="普通视图">${I.normal}</button>
          <button aria-label="页面布局">${I.page}</button>
          <button aria-label="分页预览">${I.breaks}</button>
          <span class="rule"></span>
          <button class="zoom">100%${chev}</button>
          <button class="z" aria-label="缩小比例">${I.minus}</button>
          <input type="range" min="0" max="100" value="50" aria-label="显示比例" />
          <button class="z" aria-label="放大比例">${I.plus}</button>
          <button class="end" aria-label="全屏">${I.full}</button>
        </div>
      </footer>`;
  }
}
